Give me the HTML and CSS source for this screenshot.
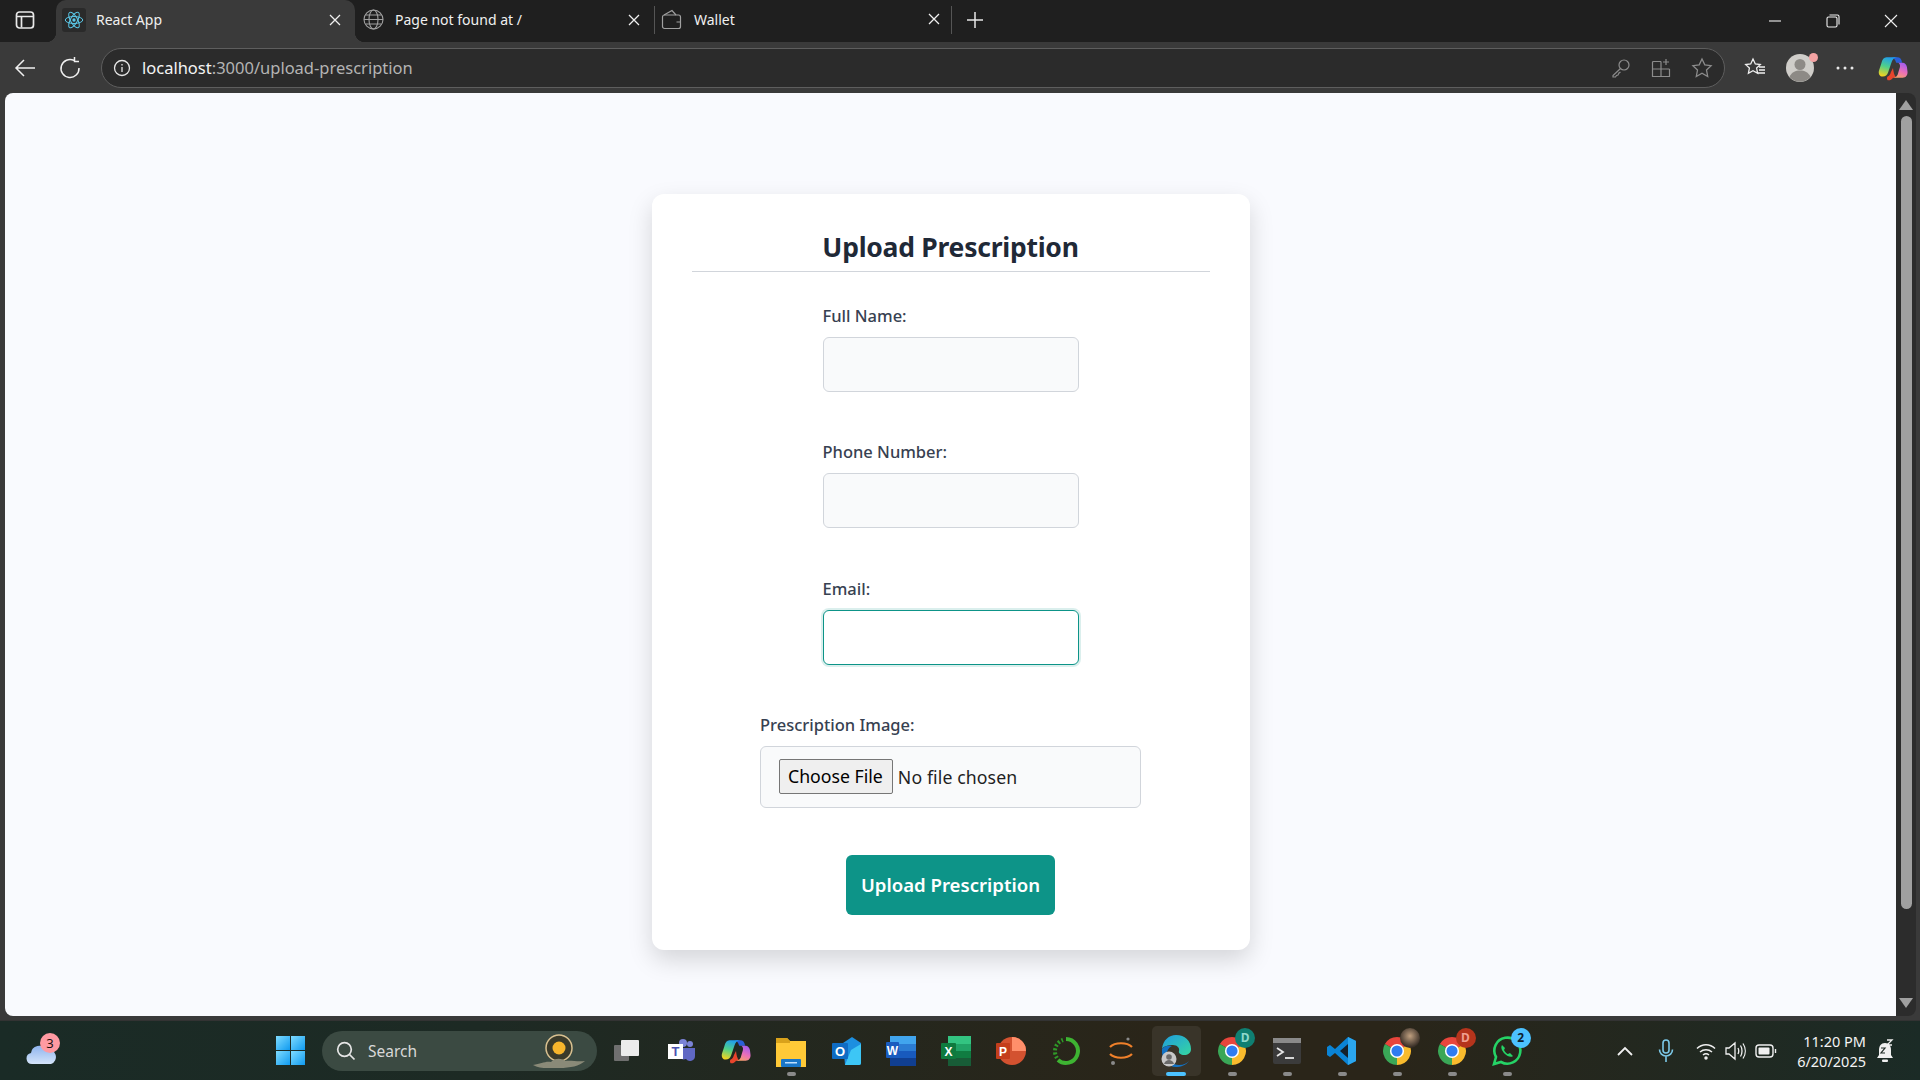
FILE: index.html
```html
<!DOCTYPE html>
<html lang="en">
  <head>
    <meta charset="UTF-8" />
    <meta name="viewport" content="width=device-width, initial-scale=1.0" />
    <title>React App</title>
    <link rel="stylesheet" href="styles.css">
  </head>
  <body>
    <svg class="defs" width="0" height="0">
      <symbol id="chrome" viewBox="0 0 28 28">
        <path d="M14 14L2.74 7.5A13 13 0 0 1 25.26 7.5Z" fill="#e8453c"/>
        <path d="M14 14L25.26 7.5A13 13 0 0 1 14 27Z" fill="#f9bb2d"/>
        <path d="M14 14L14 27A13 13 0 0 1 2.74 7.5Z" fill="#3aa757"/>
        <circle cx="14" cy="14" r="6.6" fill="#fff"/>
        <circle cx="14" cy="14" r="5.2" fill="#2f7cf0"/>
      </symbol>
      <symbol id="copilot" viewBox="0 0 28 26">
        <defs>
          <linearGradient id="cpa" x1="0.6" y1="0" x2="0.3" y2="1"><stop offset="0" stop-color="#1f9cf0"/><stop offset=".5" stop-color="#4fd08a"/><stop offset="1" stop-color="#f4d21f"/></linearGradient>
          <linearGradient id="cpb" x1="0.7" y1="0" x2="0.3" y2="1"><stop offset="0" stop-color="#a05cf0"/><stop offset=".55" stop-color="#ec6fb8"/><stop offset="1" stop-color="#f7a06a"/></linearGradient>
        </defs>
        <path d="M12 3h6c2.500 0 4 1.500 4.500 5H17c-1-3.500-3-5-5-5Z" fill="#2a5fd8"/>
        <path d="M14 13c.5 4 1 7 3 9h-3c-2 2.500-3 2.500-4.500 2.500-1.200 0-1.500-2.500-.5-3.500 1.500-.5 2.500-2 3-4Z" fill="#e8452c"/>
        <path d="M8 3h10c-3 0-4.500 2-5.500 5l-3 9c-1 3-2.500 4-5 4-3 0-4.500-3-3.500-6l2-6C4 5 5.500 3 8 3Z" fill="url(#cpa)"/>
        <path d="M18 8h5c2 0 3.500 1.500 4 4l.5 4c.5 3.500-1.500 6-4.500 6H14c3 0 4.500-2 5-5l1.500-5c.4-2-.5-4-2.500-4Z" fill="url(#cpb)"/>
      </symbol>
    </svg>

    <div class="tabstrip">
      <div class="tab-action">
        <svg width="20" height="20" viewBox="0 0 20 20" fill="none" stroke="#e8e8e8" stroke-width="1.700"><rect x="1.500" y="2" width="17" height="16" rx="3"/><path d="M1.500 6.500h17M6.500 6.500v11"/></svg>
      </div>
      <div class="tab tab-active">
        <span class="tab-icon react-tile">
          <svg width="20" height="20" viewBox="-12 -12 24 24" fill="none" stroke="#5bc8e8" stroke-width="1.200"><circle r="2" fill="#5bc8e8" stroke="none"/><ellipse rx="10.500" ry="4.200"/><ellipse rx="10.500" ry="4.200" transform="rotate(60)"/><ellipse rx="10.500" ry="4.200" transform="rotate(120)"/></svg>
        </span>
        <span class="tab-title">React App</span>
        <svg class="tab-close" width="12" height="12" viewBox="0 0 12 12" stroke="#f0f0f0" stroke-width="1.300"><path d="M1 1l10 10M11 1L1 11"/></svg>
      </div>
      <div class="tab">
        <span class="tab-icon">
          <svg width="21" height="21" viewBox="0 0 21 21" fill="none" stroke="#a0a0a0" stroke-width="1.100"><circle cx="10.500" cy="10.500" r="9.500"/><ellipse cx="10.500" cy="10.500" rx="4.500" ry="9.500"/><path d="M1 10.500h19M2.500 6h16M2.500 15h16"/></svg>
        </span>
        <span class="tab-title">Page not found at /</span>
        <svg class="tab-close" width="12" height="12" viewBox="0 0 12 12" stroke="#f0f0f0" stroke-width="1.300"><path d="M1 1l10 10M11 1L1 11"/></svg>
      </div>
      <div class="tab tab-split">
        <span class="tab-icon">
          <svg width="21" height="21" viewBox="0 0 21 21" fill="none" stroke="#a0a0a0" stroke-width="1.200"><rect x="1.500" y="6" width="18" height="13.500" rx="2"/><path d="M3 6l8-4.500L15 6M19.500 13h-4"/></svg>
        </span>
        <span class="tab-title">Wallet</span>
        <svg class="tab-close" width="12" height="12" viewBox="0 0 12 12" stroke="#f0f0f0" stroke-width="1.300"><path d="M1 1l10 10M11 1L1 11"/></svg>
      </div>
      <div class="tab-new">
        <svg width="18" height="18" viewBox="0 0 18 18" stroke="#e8e8e8" stroke-width="1.500"><path d="M9 1v16M1 9h16"/></svg>
      </div>
      <div class="win-controls">
        <svg width="14" height="14" viewBox="0 0 14 14" stroke="#f0f0f0" stroke-width="1.100"><path d="M1 7h12"/></svg>
        <svg width="14" height="14" viewBox="0 0 14 14" fill="none" stroke="#f0f0f0" stroke-width="1.100"><rect x="1" y="3" width="10" height="10" rx="1.500"/><path d="M3.500 1h8a1.500 1.500 0 0 1 1.500 1.500v8"/></svg>
        <svg width="14" height="14" viewBox="0 0 14 14" stroke="#f0f0f0" stroke-width="1.100"><path d="M1 1l12 12M13 1L1 13"/></svg>
      </div>
    </div>

    <div class="toolbar">
      <svg class="nav-btn" width="22" height="22" viewBox="0 0 22 22" fill="none" stroke="#f0f0f0" stroke-width="1.500"><path d="M21 11H2M10 3l-8 8 8 8"/></svg>
      <svg class="nav-btn" width="22" height="22" viewBox="0 0 22 22" fill="none" stroke="#f0f0f0" stroke-width="1.500"><path d="M15 3.400A9 9 0 1 0 20 11M15.500 0v4.500H20"/></svg>
      <div class="address">
        <span class="info-badge">
          <svg width="18" height="18" viewBox="0 0 18 18" fill="none" stroke="#e6e6e6" stroke-width="1.300"><circle cx="9" cy="9" r="7.500"/><path d="M9 8v5M9 5v1.400"/></svg>
        </span>
        <span class="url"><span class="url-host">localhost</span>:3000/upload-prescription</span>
        <div class="address-icons">
          <svg width="20" height="20" viewBox="0 0 20 20" fill="none" stroke="#8c8c8c" stroke-width="1.200"><circle cx="13" cy="7" r="5"/><path d="M9.500 10.500L2 17.500v1.500h2.500l1-1.500 1.500-.5 1-2 1.500-1"/></svg>
          <svg width="20" height="20" viewBox="0 0 20 20" fill="none" stroke="#8c8c8c" stroke-width="1.200"><path d="M10 3.500H2.500a1 1 0 0 0-1 1v14h17v-7.500M1.500 11h17M10 3.500v15M15 1v6M12 4h6"/></svg>
          <svg width="22" height="22" viewBox="0 0 22 22" fill="none" stroke="#8c8c8c" stroke-width="1.300"><path d="M11 2l2.800 5.900 6.300.8-4.600 4.400 1.200 6.400L11 16.300l-5.700 3.200 1.200-6.400L1.900 8.700l6.300-.8Z"/></svg>
        </div>
      </div>
      <div class="toolbar-icons">
        <svg width="22" height="22" viewBox="0 0 22 22" fill="none" stroke="#f0f0f0" stroke-width="1.300"><path d="M9 2l2.300 5 5 .6-3.700 3.500 1 5.200L9 13.700l-4.600 2.600 1-5.200L1.700 7.600l5-.6ZM15 10h6M15 13h6M13 16h8"/></svg>
        <span class="avatar">
          <svg width="28" height="28" viewBox="0 0 28 28"><circle cx="14" cy="14" r="14" fill="#cfcdc9"/><circle cx="14" cy="10.500" r="5.500" fill="#8d8a86"/><path d="M3.500 23c2-5 6-6.500 10.500-6.500S22.500 18 24.500 23A14 14 0 0 1 3.500 23Z" fill="#8d8a86"/></svg>
          <span class="avatar-dot"></span>
        </span>
        <svg class="toolbar-dots" width="20" height="6" viewBox="0 0 20 6" fill="#e8e8e8"><circle cx="3" cy="3" r="1.500"/><circle cx="10" cy="3" r="1.500"/><circle cx="17" cy="3" r="1.500"/></svg>
        <svg class="toolbar-copilot" width="30" height="28"><use href="#copilot"/></svg>
      </div>
    </div>

    <div class="window-body">
      <main class="viewport">
        <form class="card">
          <h2 class="card-title"><span>Upload Prescription</span></h2>
          <div class="field">
            <label for="name">Full Name:</label>
            <input id="name" class="text-input" type="text" />
          </div>
          <div class="field">
            <label for="phone">Phone Number:</label>
            <input id="phone" class="text-input" type="text" />
          </div>
          <div class="field">
            <label for="email">Email:</label>
            <input id="email" class="text-input is-focused" type="email" />
          </div>
          <div class="field field-file">
            <label for="image">Prescription Image:</label>
            <input id="image" class="file-input" type="file" />
          </div>
          <button class="submit" type="button">Upload Prescription</button>
        </form>
      </main>
      <div class="scrollbar">
        <span class="arrow-up"></span>
        <span class="thumb"></span>
        <span class="arrow-down"></span>
      </div>
    </div>

    <footer class="taskbar">
      <div class="weather">
        <svg width="32" height="24" viewBox="0 0 32 24"><defs><linearGradient id="cl" x1="0" y1="0" x2="0" y2="1"><stop offset="0" stop-color="#8fb4ee"/><stop offset="1" stop-color="#d4e4fa"/></linearGradient></defs><path d="M7 22a5.500 5.500 0 0 1-1-10.900A8 8 0 0 1 21 8a6 6 0 0 1 5 14Z" fill="url(#cl)"/></svg>
        <span class="weather-badge">3</span>
      </div>
      <div class="start">
        <svg width="29" height="29" viewBox="0 0 29 29"><defs><linearGradient id="win" x1="0" y1="0" x2="1" y2="1"><stop offset="0" stop-color="#7fdcff"/><stop offset="1" stop-color="#0f9af0"/></linearGradient></defs><rect width="14" height="14" fill="url(#win)"/><rect x="15" width="14" height="14" fill="url(#win)"/><rect y="15" width="14" height="14" fill="url(#win)"/><rect x="15" y="15" width="14" height="14" fill="url(#win)"/></svg>
      </div>
      <div class="search">
        <svg width="20" height="20" viewBox="0 0 20 20" fill="none" stroke="#e6e6e6" stroke-width="1.700"><circle cx="8.500" cy="8.500" r="6.800"/><path d="M13.500 13.500L18.500 18.500"/></svg>
        <span class="search-text">Search</span>
        <svg class="search-art" width="56" height="40" viewBox="0 0 56 40"><circle cx="28" cy="17" r="13" fill="#3a3a2a" stroke="#d8c090" stroke-width="1.500"/><circle cx="28" cy="17" r="6.500" fill="#f7b52c"/><path d="M2 34c8-1 12-4 18-3 4-4 10-4 14-1 6-1 12 1 20 0-6 5-14 7-26 7S8 38 2 34Z" fill="#8a8a78"/></svg>
      </div>
      <div class="task-icons">
        <div class="task">
          <svg width="28" height="24" viewBox="0 0 28 24"><rect x="2" y="6" width="15" height="16" rx="1" fill="#6f6f6f"/><rect x="9" y="1" width="18" height="16" rx="1" fill="#ececec"/></svg>
        </div>
        <div class="task">
          <svg width="30" height="30" viewBox="0 0 30 30"><circle cx="24" cy="8" r="3" fill="#7b83d6"/><circle cx="17" cy="7" r="4" fill="#7b83d6"/><path d="M12 12h17v8a5 5 0 0 1-9 3 6 6 0 0 1-8-4Z" fill="#6068c4"/><rect x="2" y="8" width="15" height="15" fill="#fff"/><text x="9.500" y="20" class="icon-letter" fill="#4a52b0" font-size="13">T</text></svg>
        </div>
        <div class="task"><svg width="30" height="28"><use href="#copilot"/></svg></div>
        <div class="task has-dot">
          <svg width="30" height="32" viewBox="0 0 30 32"><path d="M0 3h11l3 3h16v26H0Z" fill="#ffc937"/><path d="M0 3h11l3 3v2H0Z" fill="#d9a21b"/><rect x="5" y="24" width="20" height="8" rx="1" fill="#1976c8"/><rect x="9" y="27" width="12" height="1.500" fill="#bfe0ff"/></svg>
        </div>
        <div class="task">
          <svg width="30" height="30" viewBox="0 0 30 30"><path d="M12 7l9-6 9 6v20a2 2 0 0 1-2 2H14Z" fill="#1d8fe0"/><path d="M20 14l10-6v19a2 2 0 0 1-2 2H14Z" fill="#3dc6f5"/><rect x="1" y="7" width="16" height="16" rx="1" fill="#0f6cc4"/><text x="9" y="20" class="icon-letter" fill="#fff" font-size="13">O</text></svg>
        </div>
        <div class="task">
          <svg width="30" height="30" viewBox="0 0 30 30"><rect x="4" y="0" width="26" height="8" fill="#41a5ee"/><rect x="4" y="8" width="26" height="7" fill="#2b7cd3"/><rect x="4" y="15" width="26" height="7" fill="#185abd"/><rect x="4" y="22" width="26" height="8" fill="#103f91"/><rect x="0" y="6" width="13" height="16" rx="1" fill="#1a5cbf"/><text x="6.500" y="19" class="icon-letter" fill="#fff" font-size="12">W</text></svg>
        </div>
        <div class="task">
          <svg width="30" height="30" viewBox="0 0 30 30"><rect x="7" y="0" width="23" height="8" fill="#33c481"/><rect x="7" y="8" width="23" height="7" fill="#21a366"/><rect x="7" y="15" width="23" height="7" fill="#107c41"/><rect x="7" y="22" width="23" height="8" fill="#185c37"/><rect x="0" y="7" width="15" height="16" rx="1" fill="#0f7a3e"/><text x="7.500" y="20" class="icon-letter" fill="#fff" font-size="12">X</text></svg>
        </div>
        <div class="task">
          <svg width="30" height="30" viewBox="0 0 30 30"><circle cx="16" cy="15" r="14" fill="#d35230"/><path d="M16 1a14 14 0 0 1 14 14H16Z" fill="#ff8f6b"/><rect x="0" y="7" width="14" height="16" rx="1" fill="#c43e1c"/><text x="7" y="20" class="icon-letter" fill="#fff" font-size="12">P</text></svg>
        </div>
        <div class="task">
          <svg width="30" height="30" viewBox="0 0 30 30" fill="none"><path d="M15 3a12 12 0 1 1-8 21" stroke="#3eb432" stroke-width="4"/><path d="M6 22A12 12 0 0 1 12 4" stroke="#2f9a28" stroke-width="4" stroke-dasharray="2 2"/></svg>
        </div>
        <div class="task">
          <svg width="26" height="30" viewBox="0 0 26 30" fill="none"><path d="M2 11c5-5 17-5 22 0M2 18c5 5 17 5 22 0" stroke="#f0802a" stroke-width="2.200"/><circle cx="20" cy="3" r="1.600" fill="#8a8a8a"/><circle cx="5" cy="27" r="2" fill="#8a8a8a"/></svg>
        </div>
        <div class="task task-active">
          <svg width="32" height="34" viewBox="0 0 32 34"><defs><linearGradient id="edge" x1="0" y1="0" x2="1" y2="1"><stop offset="0" stop-color="#1f9ce0"/><stop offset="1" stop-color="#36d6a0"/></linearGradient></defs><path d="M2 15C3 6 9 1 16 1c9 0 15 6 15 14 0 4-3 6-7 6-3 0-6-2-5-4 1-3-2-6-6-6-5 0-9 1-11 4Z" fill="url(#edge)"/><path d="M2 15c2-3 6-4 10-3-4 2-6 6-5 11 1 4 6 8 12 8 5 0 8-2 10-4-3 4-8 6-13 6C8 33 1 25 2 15Z" fill="#1272c4"/><circle cx="9" cy="25" r="7.500" fill="#c8c8c8"/><circle cx="9" cy="23" r="2.800" fill="#6a6a6a"/><path d="M4 30c1-3 3-4 5-4s4 1 5 4Z" fill="#6a6a6a"/></svg>
        </div>
        <div class="task has-dot">
          <svg width="30" height="30"><use href="#chrome"/></svg>
          <span class="task-badge badge-teal">D</span>
        </div>
        <div class="task has-dot">
          <svg width="28" height="26" viewBox="0 0 28 26"><rect width="28" height="26" rx="2" fill="#3b3b3b"/><rect width="28" height="5" fill="#8a8a8a"/><path d="M4 10l6 4-6 4" fill="none" stroke="#e8e8e8" stroke-width="1.800"/><path d="M12 20h9" stroke="#e8e8e8" stroke-width="1.800"/></svg>
        </div>
        <div class="task has-dot">
          <svg width="30" height="30" viewBox="0 0 30 30"><path d="M21 1l8 4v20l-8 4L8 17l-5 4-3-2v-8l3-2 5 4Z" fill="#0a84d6"/><path d="M21 1l8 4v20l-8 4Z" fill="#2ba6ee"/><path d="M21 8v14l-8-7Z" fill="#14202a"/></svg>
        </div>
        <div class="task has-dot">
          <svg width="30" height="30"><use href="#chrome"/></svg>
          <span class="task-badge badge-photo"></span>
        </div>
        <div class="task has-dot">
          <svg width="30" height="30"><use href="#chrome"/></svg>
          <span class="task-badge badge-red">D</span>
        </div>
        <div class="task has-dot">
          <svg width="32" height="32" viewBox="0 0 32 32" fill="none"><path d="M3 29l2-7a13 13 0 1 1 5 5Z" stroke="#25d366" stroke-width="2.600"/><path d="M11 10c-2 3 1 7 3 9s6 4 8 2l-3-3-2 1c-1 0-3-2-4-4l1-2Z" fill="#25d366"/></svg>
          <span class="task-badge badge-blue">2</span>
        </div>
      </div>
      <div class="tray">
        <svg class="tray-chevron" width="16" height="10" viewBox="0 0 16 10" fill="none" stroke="#f0f0f0" stroke-width="1.800"><path d="M1 9l7-7 7 7"/></svg>
        <svg class="tray-mic" width="16" height="24" viewBox="0 0 16 24" fill="none" stroke="#7cc9e8" stroke-width="1.600"><rect x="5" y="1" width="6" height="13" rx="3"/><path d="M1.500 10.500a6.500 6.500 0 0 0 13 0M8 17v6"/></svg>
        <svg width="20" height="18" viewBox="0 0 20 18" fill="none" stroke="#f0f0f0" stroke-width="1.500"><path d="M1 6.500c5-5 13-5 18 0M4 10c3.500-3 8.500-3 12 0M7 13c1.800-1.500 4.200-1.500 6 0"/><circle cx="10" cy="16" r="1" fill="#f0f0f0"/></svg>
        <svg width="21" height="20" viewBox="0 0 21 20" fill="none" stroke="#f0f0f0" stroke-width="1.300"><path d="M1 7v6h3l6 5V2L4 7ZM13 7c1 2 1 4 0 6M15.500 4.500c2 3 2 8 0 11M18 2.500c3 4.500 3 10.500 0 15"/></svg>
        <svg width="22" height="14" viewBox="0 0 22 14" fill="none" stroke="#f0f0f0" stroke-width="1.400"><rect x="1" y="1" width="17" height="12" rx="3"/><rect x="3.500" y="3.500" width="11" height="7" rx="1" fill="#f0f0f0" stroke="none"/><path d="M20.500 5v4"/></svg>
        <div class="clock">
          <span>11:20 PM</span>
          <span>6/20/2025</span>
        </div>
        <svg width="18" height="24" viewBox="0 0 18 24"><path d="M9 4c-4 0-6 3-6 7v5l-2 3h16l-2-3v-5c0-4-2-7-6-7Z" fill="#f0f0f0"/><rect x="6" y="20.500" width="6" height="2.500" rx="1" fill="#f0f0f0"/><path d="M5 9h4l-4 5h4" fill="none" stroke="#1f2a25" stroke-width="1.200"/><path d="M11 1h5l-5 5h5" fill="none" stroke="#f0f0f0" stroke-width="1.300"/></svg>
      </div>
    </footer>
  </body>
</html>
```

FILE: styles.css
```css
* {
  padding: 0;
  margin: 0;
  box-sizing: border-box;
}
html,
body {
  height: 100%;
  overflow: hidden;
}
body {
  display: flex;
  flex-direction: column;
  background-color: #3a3a3a;
  font-family: "Noto Sans", "Liberation Sans", sans-serif;
}
.defs {
  position: absolute;
}

/* tabs */
.tabstrip {
  display: flex;
  align-items: stretch;
  flex: 0 0 42px;
  background: #1f1f1f;
}
.tab-action {
  display: flex;
  align-items: center;
  justify-content: center;
  width: 56px;
  padding: 0 7px 2px 0;
}
.tab {
  display: flex;
  align-items: center;
  width: 299px;
  padding: 0 14px 3px 6px;
  color: #f0f0f0;
  font-size: 14px;
}
.tab-active {
  position: relative;
  background: #3a3a3a;
  border-radius: 10px 10px 0 0;
}
.tab-active::before,
.tab-active::after {
  content: "";
  position: absolute;
  bottom: 0;
  width: 10px;
  height: 10px;
}
.tab-active::before {
  left: -10px;
  background: radial-gradient(circle at 0 0, #1f1f1f 10px, #3a3a3a 10.500px);
}
.tab-active::after {
  right: -10px;
  background: radial-gradient(circle at 100% 0, #1f1f1f 10px, #3a3a3a 10.500px);
}
.tab-split {
  width: 298px;
  height: 28px;
  margin-top: 6px;
  padding: 0 11px 2px 4px;
  border-left: 1px solid #555;
  border-right: 1px solid #555;
}
.tab-split .tab-icon {
  margin-right: 11px;
}
.tab-icon {
  display: flex;
  align-items: center;
  justify-content: center;
  width: 24px;
  height: 24px;
  margin-right: 10px;
}
.react-tile {
  background: #2a2a2a;
  border-radius: 3px;
}
.tab-title {
  flex: 1;
  white-space: nowrap;
}
.tab-new {
  display: flex;
  align-items: center;
  padding: 0 0 3px 14px;
}
.win-controls {
  display: flex;
  align-items: center;
  gap: 44px;
  margin-left: auto;
  padding-right: 22px;
}

/* address bar row */
.toolbar {
  display: flex;
  align-items: center;
  flex: 0 0 51px;
  padding: 0 0 0 14px;
  background: #3a3a3a;
}
.nav-btn {
  margin-right: 23px;
}
.nav-btn + .nav-btn {
  margin-right: 20px;
}
.address {
  display: flex;
  align-items: center;
  width: 1624px;
  height: 40px;
  margin-top: 1px;
  padding-left: 7px;
  background: #2b2b2b;
  border: 1px solid #5e5e5e;
  border-radius: 20px;
}
.info-badge {
  display: flex;
  align-items: center;
  justify-content: center;
  width: 26px;
  height: 26px;
  margin-right: 7px;
}
.url {
  padding-bottom: 2px;
  color: #b4b4b4;
  font-size: 16.500px;
}
.url-host {
  color: #f4f4f4;
}
.address-icons {
  display: flex;
  align-items: center;
  gap: 20px;
  margin-left: auto;
  padding-right: 11px;
}
.toolbar-icons {
  display: flex;
  align-items: center;
  gap: 18px;
  padding-left: 19px;
}
.avatar {
  position: relative;
  display: flex;
  margin-left: 2px;
}
.avatar-dot {
  position: absolute;
  top: -1px;
  right: -4px;
  width: 9px;
  height: 9px;
  background: #f4a3a3;
  border-radius: 50%;
}
.toolbar-dots {
  margin-left: 3px;
}
.toolbar-copilot {
  margin-left: 5px;
}

/* page */
.window-body {
  display: flex;
  flex: 0 0 923px;
  padding-left: 5px;
}
.viewport {
  display: flex;
  justify-content: center;
  align-items: flex-start;
  width: 1891px;
  padding-top: 101px;
  background: #f9fafe;
  border-radius: 8px 0 0 8px;
}
.card {
  display: flex;
  flex-direction: column;
  align-items: center;
  width: 598px;
  padding: 32px 40px 35px;
  background: #fff;
  border-radius: 12px;
  box-shadow: 0 10px 25px rgba(0, 0, 0, 0.15);
}
.card-title {
  flex: none;
  width: 100%;
  height: 46px;
  margin-bottom: 33px;
  border-bottom: 1px solid #d1d5db;
  color: #1f2937;
  font-size: 26.500px;
  font-weight: 700;
  line-height: 42px;
  letter-spacing: -0.25px;
  text-align: center;
}
.field {
  display: flex;
  flex: none;
  flex-direction: column;
  width: 256px;
  height: 136.250px;
}
.field label {
  height: 25px;
  margin-bottom: 7px;
  color: #374151;
  font-size: 16.500px;
  font-weight: 500;
  line-height: 22px;
}
.text-input {
  height: 55px;
  background: #f9fafb;
  border: 1px solid #d1d5db;
  border-radius: 6px;
  outline: none;
}
.is-focused {
  background: #fff;
  border-color: #0d9488;
  box-shadow: 0 0 0 2px rgba(13, 148, 136, 0.15);
}
.field-file {
  width: 381px;
  height: 141px;
}
.file-input {
  height: 62px;
  padding: 12px 18px;
  background: #f9fafb;
  border: 1px solid #d1d5db;
  border-radius: 6px;
  color: #1f1f1f;
  font-family: inherit;
  font-size: 17.700px;
  letter-spacing: 0.1px;
}
.file-input::file-selector-button {
  height: 35px;
  padding: 0 9px 0 8px;
  margin-right: 5px;
  background: #efefef;
  border: 1px solid #767676;
  border-radius: 2px;
  color: #000;
  font: inherit;
}
.submit {
  flex: none;
  width: 209px;
  height: 60px;
  background: #0d9488;
  border: none;
  border-radius: 6px;
  color: #fff;
  font-family: inherit;
  font-size: 18.600px;
  font-weight: 600;
}
.scrollbar {
  position: relative;
  display: flex;
  flex-direction: column;
  align-items: center;
  width: 20px;
  padding: 7px 0 8px;
  background: #2c2c2c;
  border-radius: 0 8px 8px 0;
}
.arrow-up,
.arrow-down {
  width: 0;
  height: 0;
  border-left: 7px solid transparent;
  border-right: 7px solid transparent;
}
.arrow-up {
  border-bottom: 10px solid #a0a0a0;
}
.arrow-down {
  border-top: 10px solid #a0a0a0;
}
.thumb {
  width: 11px;
  height: 793px;
  margin: 6px 0 auto;
  background: #a0a0a0;
  border-radius: 6px;
}

/* taskbar */
.taskbar {
  position: relative;
  display: flex;
  align-items: center;
  flex: 1;
  margin-top: 4px;
  border-top: 1px solid #333;
  background: linear-gradient(90deg, #1a2b26 0%, #1d2a24 25%, #2a2519 60%, #2a2519 72%, #1b2b26 100%);
}
.weather {
  position: relative;
  display: flex;
  width: 263px;
  padding: 6px 0 0 25px;
}
.weather-badge {
  position: absolute;
  top: -3px;
  left: 40px;
  width: 20px;
  height: 20px;
  background: #ff9aa2;
  border-radius: 50%;
  color: #201010;
  font-size: 13px;
  line-height: 20px;
  text-align: center;
}
.start {
  display: flex;
  justify-content: center;
  width: 55px;
  margin-right: 4px;
}
.search {
  display: flex;
  align-items: center;
  width: 275px;
  height: 40px;
  padding-left: 14px;
  background: #3b4a42;
  border-radius: 20px;
}
.search-text {
  margin-left: 12px;
  color: #d8d8d8;
  font-size: 15.500px;
}
.search-art {
  margin-left: auto;
  margin-right: 10px;
}
.task-icons {
  display: flex;
  margin-left: 1px;
}
.task {
  position: relative;
  display: flex;
  align-items: center;
  justify-content: center;
  width: 55.100px;
  height: 50px;
}
.icon-letter {
  font-family: "Liberation Sans", sans-serif;
  font-weight: 700;
  text-anchor: middle;
}
.has-dot::after {
  content: "";
  position: absolute;
  left: 50%;
  bottom: 0;
  width: 9px;
  height: 4px;
  margin-left: -4px;
  background: #8a8a8a;
  border-radius: 2px;
}
.task-active::before {
  content: "";
  position: absolute;
  top: 0;
  bottom: 0;
  left: 3px;
  right: 3px;
  background: rgba(255, 255, 255, 0.07);
  border-radius: 5px;
}
.task-active::after {
  content: "";
  position: absolute;
  left: 50%;
  bottom: 0;
  width: 20px;
  height: 4px;
  margin-left: -10px;
  background: #4cc2ff;
  border-radius: 2px;
}
.task-active svg {
  position: relative;
}
.task-badge {
  position: absolute;
  top: 2px;
  right: 4px;
  width: 20px;
  height: 20px;
  border-radius: 50%;
  font-size: 12px;
  font-weight: 700;
  line-height: 20px;
  text-align: center;
}
.badge-teal {
  background: #0f7f72;
  color: #8fd8cc;
}
.badge-red {
  background: #b5341c;
  color: #f0a090;
}
.badge-blue {
  background: #4cc2ff;
  color: #0c2030;
}
.badge-photo {
  background: radial-gradient(circle at 50% 40%, #c0a080, #3a3028 70%);
}
.tray {
  display: flex;
  align-items: center;
  gap: 9px;
  margin-left: auto;
  padding-right: 26px;
}
.tray-chevron {
  margin-right: 16px;
}
.tray-mic {
  margin-right: 13px;
}
.clock {
  display: flex;
  flex-direction: column;
  align-items: flex-end;
  margin: 0 1px 0 11px;
  color: #f4f4f4;
  font-size: 14.500px;
  line-height: 20px;
}
```
